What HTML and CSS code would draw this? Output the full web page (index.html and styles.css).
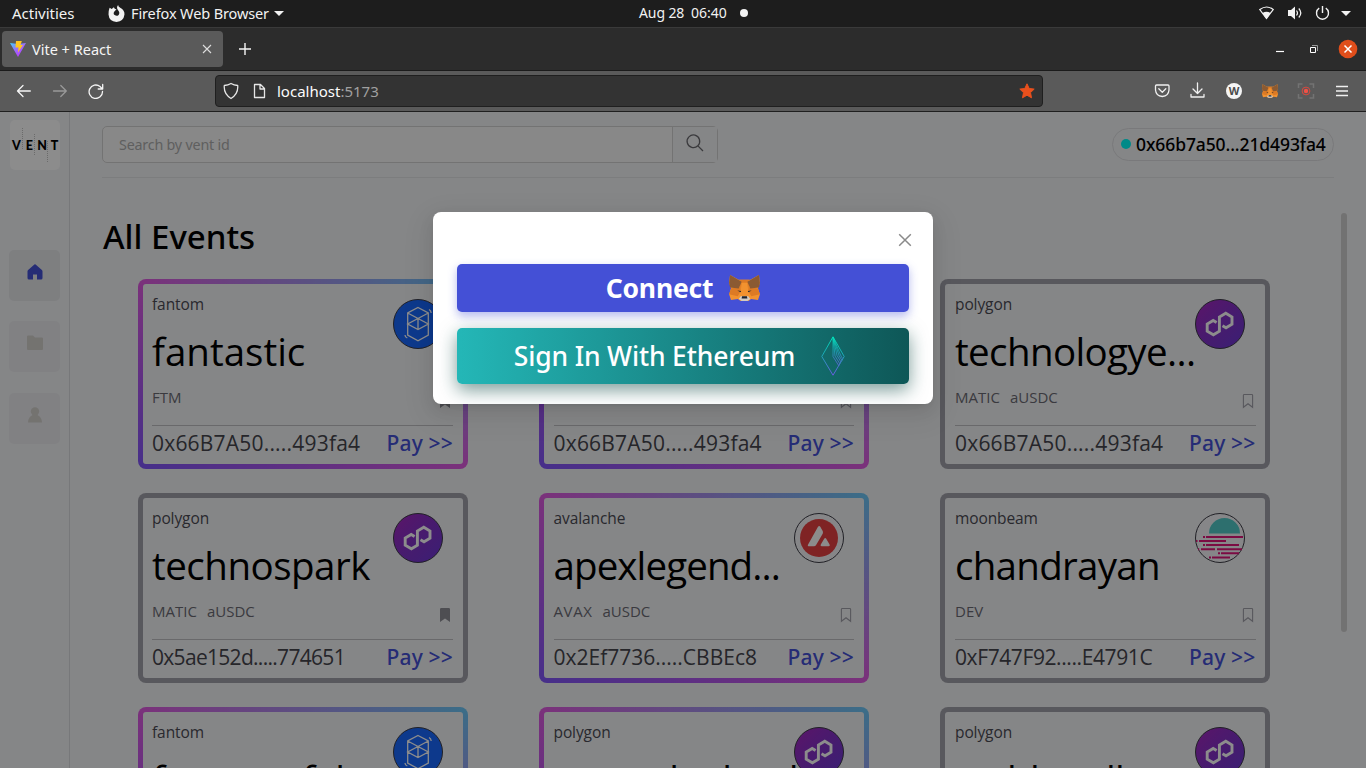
FILE: index.html
```html
<!DOCTYPE html>
<html lang="en">
<head>
<meta charset="utf-8">
<title>Vite + React</title>
<link rel="stylesheet" href="styles.css">
</head>
<body>
<svg class="defs" width="0" height="0">
  <defs>
    <linearGradient id="polyFill" x1="0" y1="0" x2="1" y2="1"><stop offset="0" stop-color="#a726c1"/><stop offset="0.5" stop-color="#8232c8"/><stop offset="1" stop-color="#6b38d4"/></linearGradient>
    <linearGradient id="ethLine" x1="0" y1="0" x2="0" y2="1"><stop offset="0" stop-color="#00e0b8"/><stop offset="0.45" stop-color="#1ba8b5"/><stop offset="1" stop-color="#6a5be0"/></linearGradient>
    <linearGradient id="viteFill" x1="0" y1="0" x2="0.7" y2="1"><stop offset="0" stop-color="#41d1ff"/><stop offset="0.5" stop-color="#9b6cfb"/><stop offset="1" stop-color="#bd34fe"/></linearGradient>
  </defs>
  <symbol id="fox" viewBox="0 0 32 27">
    <path fill="#f2922f" d="M1 0l9 5h12l9-5 1 8-2 6 2 6-2 6-7-1-3 2h-8l-3-2-7 1-2-6 2-6-2-6z"/>
    <path fill="#dd7a24" d="M2 14l9-2 1 5-3 5-9-2zM30 14l-9-2-1 5 3 5 9-2zM11 5h10l-1 12h-8z"/>
    <path fill="#f2922f" d="M13 8h6l1 10h-8z"/>
    <path fill="#8b5a32" d="M1 0l12 7-3 7-9-1-1-5zM31 0L19 7l3 7 9-1 1-5z"/>
    <path fill="#d2cbc4" d="M12 22l8 0 2 3-3 2h-6l-3-2z"/>
    <path fill="#1d2430" d="M13.500 22h5l.5 2.500h-6zM8.500 16l4 .5-.5 1.500zM23.500 16l-4 .5.5 1.500z"/>
  </symbol>
  <symbol id="polygon" viewBox="0 0 50 50">
    <circle cx="25" cy="25" r="24.500" fill="url(#polyFill)" stroke="#3c3c46"/>
    <path fill="none" stroke="#fff" stroke-width="2.900" d="M21.600 23.400l-3.400-2-6 3.600v7.200l6.200 3.600 6-3.600V18l6.400-3.700 6.200 3.700v7.200L31 28.800l-3.500-2"/>
  </symbol>
  <symbol id="fantom" viewBox="0 0 50 50">
    <circle cx="25" cy="25" r="24.500" fill="#1969ff" stroke="#3c3c46"/>
    <path fill="none" stroke="#fff" stroke-width="1.300" d="M25 8.500L35.300 14v22L25 41.700 14.700 36V14zM14.700 14L35.300 25 25 30.600 14.700 25 35.300 14M25 19.500v11M36 10.500q2 1 2.200 3.500M12 36q0 2 2.300 3"/>
  </symbol>
  <symbol id="avalanche" viewBox="0 0 50 50">
    <circle cx="25" cy="25" r="24.500" fill="#fff" fill-opacity=".15" stroke="#3c3c46"/>
    <circle cx="25" cy="25" r="19" fill="#e84142"/>
    <path fill="#fff" d="M24 13.800q1.200-1.600 2.300 0l2.400 4.300q.6 1.200 0 2.600l-6.600 11.300q-.8 1.200-2.200 1.200h-4.800q-2 0-1-1.800zM30.200 25.800q1-1.500 2 0l3.400 5.800q.8 1.500-1 1.600h-7q-1.600-.1-.8-1.600z"/>
  </symbol>
  <symbol id="moonbeam" viewBox="0 0 50 50">
    <circle cx="25" cy="25" r="24.500" fill="#fff" fill-opacity=".15" stroke="#3c3c46"/>
    <path fill="#53cbc8" d="M14 20.500a15.500 15.500 0 0131 0z"/>
    <path fill="none" stroke="#e1147b" stroke-width="2" d="M8 24h2m1 0h37M1 28h1.500M4 28h27M8 32h2m1 0h33M3 36.300h1.200M6 36.300h14M22 36.300h25M23 40.300h2m1 0h18M14 44.400h2m1 0h18"/>
  </symbol>
  <symbol id="mark" viewBox="0 0 12 16"><path fill="none" stroke="#a1a1aa" stroke-width="1.100" d="M2.200 1.500h7.600q.8 0 .8.800v12L6 10.700 1.400 14.300v-12q0-.8.800-.8z"/></symbol>
  <symbol id="mark-on" viewBox="0 0 12 16"><path fill="#8e8e96" d="M2.200 1h7.600q1.200 0 1.200 1.200v12.800L6 11.500 1 15V2.200Q1 1 2.200 1z"/></symbol>
</svg>

<header class="topbar">
  <span class="activities">Activities</span>
  <svg class="ff" viewBox="0 0 16 16"><path fill="#f2f2f2" fill-rule="evenodd" d="M1.500 2.500l2 1.300L5.500 2l1 1.800 1.500.2-2 2q-1.500 2 .3 3.500 2 1.300 3.700-.2 1.500-2-.5-4.300Q7.500 2.500 9.500 0q0 1.500 2 2.700Q15.800 5 15.500 9q-.8 6.500-7.500 7Q1 15.500.5 9 .3 5.500 1.500 2.500z"/></svg>
  <span class="app">Firefox Web Browser</span><i class="caret"></i>
  <span class="date">Aug 28</span><span class="time">06:40</span><i class="dot"></i>
  <svg class="tray" width="92" height="16" viewBox="0 0 92 16">
    <path fill="none" stroke="#f2f2f2" stroke-width="1.200" d="M.8 4.500q7-5 13.400 0L7.500 13.500z"/><path fill="#f2f2f2" d="M3.500 8q4-2.600 8 0l-4 6z"/>
    <path fill="#f2f2f2" d="M29 5h3l4-3.500v13L32 11h-3z"/><path fill="none" stroke="#f2f2f2" stroke-width="1.200" d="M37.500 5.500q2 2.500 0 5M39.800 3.500q4 4.500 0 9"/>
    <path fill="none" stroke="#f2f2f2" stroke-width="1.400" d="M60.200 3.200a6 6 0 106.600 0M63.500 1v7"/>
    <path fill="#f2f2f2" d="M82 6h10l-5 5z"/>
  </svg>
</header>

<div class="tabs">
  <div class="tab">
    <svg width="16" height="16" viewBox="0 0 16 16"><path fill="url(#viteFill)" d="M0 2l8 1 8-1-8 14z"/><path fill="#ffc51f" d="M6 0l6-.5L10.500 4h2.500L8 11.500l.5-5H5.500z"/></svg>
    <span>Vite + React</span>
    <svg class="tab-x" width="10" height="10" viewBox="0 0 10 10"><path stroke="#ddd" stroke-width="1.100" d="M1 1l8 8M9 1L1 9"/></svg>
  </div>
  <svg class="newtab" width="12" height="12" viewBox="0 0 12 12"><path stroke="#f5f5f5" stroke-width="1.400" d="M6 0v12M0 6h12"/></svg>
  <svg class="winctl" width="82" height="20" viewBox="0 0 82 20"><path stroke="#fff" stroke-width="1.200" d="M0 12.500h8"/><path fill="none" stroke="#fff" d="M34.500 8.500h5v5h-5z"/><path fill="none" stroke="#999" d="M36 6.500h5.500V12"/><circle cx="72" cy="10" r="9.300" fill="#e04e1b"/><path stroke="#fff" stroke-width="1.500" d="M68.500 6.500l7 7M75.500 6.500l-7 7"/></svg>
</div>

<div class="toolbar">
  <svg class="nav" width="88" height="16" viewBox="0 0 88 16" fill="none" stroke-width="1.300" stroke-linecap="round" stroke-linejoin="round"><path stroke="#f5f5f5" d="M14.300 8H1.500M7 2.500L1.500 8 7 13.500"/><path stroke="#999" d="M37.500 8h12.800M44.800 2.500L50.300 8l-5.500 5.500"/><path stroke="#f5f5f5" d="M86.500 8.500a6.700 6.700 0 11-2.500-5l2 2M86.700 1.500v4.500h-4.500"/></svg>
  <div class="url">
    <svg width="46" height="18" viewBox="0 0 46 18" fill="none" stroke="#e6e6e6" stroke-width="1.300" stroke-linejoin="round"><path d="M9 1.500q3 1.700 6.700 2Q16.500 12 9 16.500 1.500 12 2.300 3.500 6 3.200 9 1.500zM32.500 2.500h6l4 4v9h-10zM38 2.500v4.500h4.500"/></svg>
    <span class="host">localhost<b>:5173</b></span>
    <svg class="star" width="18" height="18" viewBox="0 0 18 18"><path fill="#e9501d" stroke="#e9501d" stroke-linejoin="round" d="M9 1.800l2.200 4.700 5 .6-3.700 3.500 1 5.200L9 13.200l-4.500 2.600 1-5.200L1.800 7.100l5-.6z"/></svg>
  </div>
  <svg class="ext" width="196" height="18" viewBox="0 0 196 18">
    <g fill="none" stroke="#f0f0f0" stroke-width="1.300" stroke-linecap="round" stroke-linejoin="round"><path d="M2.500 3H14q1 0 1 1v4q-.5 6-6.700 6.500Q2 14 1.500 8V4q0-1 1-1zM4.800 6.800l3.500 3.400 3.500-3.400M43.500 1v10.500M39 7l4.500 4.500L48 7M37 12.500V15h13v-2.500"/><path stroke-linecap="butt" d="M182 4.500h12M182 9h12M182 13.500h12"/></g>
    <circle cx="80" cy="9" r="8" fill="#f5f5f5"/><text x="80" y="13" class="w" text-anchor="middle">W</text>
    <use href="#fox" x="108" y="1.500" width="16" height="15"/>
    <path fill="none" stroke="#737373" stroke-width="1.500" d="M144.500 6V2h4M155.500 2h4v4M159.500 12v4h-4M148.500 16h-4v-4"/><circle cx="152" cy="9" r="3.900" fill="none" stroke="#d8483e"/><circle cx="152" cy="9" r="2.200" fill="#ef5147"/>
  </svg>
</div>

<div class="page">
  <nav class="side">
    <svg class="logo" width="50" height="50" viewBox="0 0 50 50"><rect width="50" height="50" rx="5" fill="#fff"/><path stroke="#c4c4c4" stroke-dasharray="1 1" d="M12.500 8v22M24.500 14v22M37.500 21v22"/><text y="29.500" x="2 15.800 27.200 40.800">VENT</text></svg>
    <a class="tile tile--home"><svg viewBox="0 0 16 16"><path fill="#4450d6" d="M7.400.5q.6-.6 1.200 0l6 5.200q.9.7.9 1.500V14q0 1.500-1.500 1.500h-4v-5H6v5H2Q.5 15.500.5 14V7.200q0-.8.9-1.500z"/></svg></a>
    <a class="tile"><svg viewBox="0 0 16 16"><path fill="#d4d1cd" d="M1 0.500h5l2 2h7q1 0 1 1v10.500q0 1-1 1H1q-1 0-1-1V1.500q0-1 1-1z"/></svg></a>
    <a class="tile"><svg viewBox="0 0 16 16"><circle cx="8" cy="4.500" r="4.200" fill="#d4d1cd"/><path fill="#d4d1cd" d="M5.500 8h5q4.300 2 4.500 7.500H1Q1.200 10 5.500 8z"/></svg></a>
  </nav>
  <main class="main">
    <div class="head">
      <div class="search"><span>Search by vent id</span><i><svg width="20" height="20" viewBox="0 0 20 20"><path fill="none" stroke="#6b6b70" stroke-width="1.300" d="M12.800 12.800a6.300 6.300 0 11.100-.1zM12.900 12.900l5.100 5.100"/></svg></i></div>
      <div class="wallet"><i></i><span>0x66b7a50...21d493fa4</span></div>
    </div>
    <h1>All Events</h1>
    <div class="grid">
      <article class="card card--glow"><div class="in"><p class="chain">fantom</p><h2 class="t-fantastic">fantastic</h2><svg class="coin"><use href="#fantom"/></svg><div class="tokens"><span>FTM</span><svg><use href="#mark-on"/></svg></div><div class="foot"><span class="a1">0x66B7A50.....493fa4</span><b>Pay &gt;&gt;</b></div></div></article>
      <article class="card card--glow"><div class="in"><svg class="coin"><use href="#fantom"/></svg><div class="tokens tokens--bare"><svg><use href="#mark"/></svg></div><div class="foot"><span class="a1">0x66B7A50.....493fa4</span><b>Pay &gt;&gt;</b></div></div></article>
      <article class="card"><div class="in"><p class="chain">polygon</p><h2 class="t-technologye">technologye...</h2><svg class="coin"><use href="#polygon"/></svg><div class="tokens"><span>MATIC</span><span>aUSDC</span><svg><use href="#mark"/></svg></div><div class="foot"><span class="a1">0x66B7A50.....493fa4</span><b>Pay &gt;&gt;</b></div></div></article>
      <article class="card"><div class="in"><p class="chain">polygon</p><h2 class="t-technospark">technospark</h2><svg class="coin"><use href="#polygon"/></svg><div class="tokens"><span>MATIC</span><span>aUSDC</span><svg><use href="#mark-on"/></svg></div><div class="foot"><span class="a2">0x5ae152d.....774651</span><b>Pay &gt;&gt;</b></div></div></article>
      <article class="card card--glow"><div class="in"><p class="chain">avalanche</p><h2 class="t-apex">apexlegend...</h2><svg class="coin"><use href="#avalanche"/></svg><div class="tokens"><span class="avax">AVAX</span><span>aUSDC</span><svg><use href="#mark"/></svg></div><div class="foot"><span class="a3">0x2Ef7736.....CBBEc8</span><b>Pay &gt;&gt;</b></div></div></article>
      <article class="card"><div class="in"><p class="chain">moonbeam</p><h2 class="t-chandrayan">chandrayan</h2><svg class="coin"><use href="#moonbeam"/></svg><div class="tokens"><span>DEV</span><svg><use href="#mark"/></svg></div><div class="foot"><span class="a4">0xF747F92.....E4791C</span><b>Pay &gt;&gt;</b></div></div></article>
      <article class="card card--glow"><div class="in"><p class="chain">fantom</p><h2>fantomufel</h2><svg class="coin"><use href="#fantom"/></svg></div></article>
      <article class="card card--glow"><div class="in"><p class="chain">polygon</p><h2>cosmolanland</h2><svg class="coin"><use href="#polygon"/></svg></div></article>
      <article class="card"><div class="in"><p class="chain">polygon</p><h2>techlunall</h2><svg class="coin"><use href="#polygon"/></svg></div></article>
    </div>
    <i class="thumb"></i>
  </main>

  <div class="overlay">
    <section class="modal">
      <svg class="close" width="14" height="14" viewBox="0 0 14 14"><path stroke="#8a8a8a" stroke-width="1.500" d="M1.200 1.200l11.600 11.600M12.800 1.200L1.200 12.800"/></svg>
      <button class="btn btn--connect"><span>Connect</span><svg width="32" height="27"><use href="#fox"/></svg></button>
      <button class="btn btn--eth"><span>Sign In With Ethereum</span>
        <svg width="24" height="40" viewBox="0 0 24 40" fill="none" stroke="url(#ethLine)" stroke-width="1"><path d="M12 .8L23.200 20.500 12 39.200.8 20.500z"/><path stroke-width=".8" d="M12 1v19.500L18 30M12 1l2 19 5 8M12 1l4 18.500 4 6.500M12 1l6 18.500 3 5M12 1l8 19 1.500 2.500"/></svg></button>
    </section>
  </div>
</div>
</body>
</html>
```
FILE: styles.css
```css
* { box-sizing: border-box; }
body { margin: 0; height: 768px; overflow: hidden; display: flex; flex-direction: column; font-family: "Noto Sans", sans-serif; background: #f3f4f6; }
h1, h2, p { margin: 0; font-weight: 400; }
svg { display: block; flex: none; }
.defs { position: absolute; }

/* desktop bar */
.topbar { height: 28px; flex: none; display: flex; align-items: center; background: #1d1d1d; border-bottom: 1px solid #3a3a3a; color: #f2f2f2; font-size: 15px; line-height: 20px; padding: 0 0 1px 12px; white-space: nowrap; }
.activities { width: 96px; }
.ff { width: 17px; height: 17px; margin-right: 6px; }
.app { font-size: 14.500px; letter-spacing: -.12px; width: 139px; }
.caret { border: 5px solid transparent; border-top-color: #f2f2f2; border-bottom: 0; margin: 1px 0 0 4px; }
.date { font-size: 14px; letter-spacing: -.1px; margin-left: 355px; width: 52px; }
.time { font-size: 14px; width: 49px; }
.dot { width: 8px; height: 8px; border-radius: 50%; background: #f2f2f2; }
.tray { margin-left: auto; margin-right: 15px; }

/* browser tabs */
.tabs { height: 43px; flex: none; display: flex; align-items: center; background: #2c2c2c; border-bottom: 1px solid #1b1b1b; }
.tab { width: 221px; height: 36px; margin: 0 0 1px 2px; border-radius: 4px; background: #5a5a5a; display: flex; align-items: center; gap: 6px; padding: 0 11px 0 8px; color: #f5f5f5; font-size: 14.500px; }
.tab-x { margin-left: auto; }
.newtab { margin-left: 15.500px; }
.winctl { margin: 0 8px 0 auto; }

/* browser toolbar */
.toolbar { height: 41px; flex: none; display: flex; align-items: center; background: #5a5a5a; border-bottom: 1px solid #1f1f1f; }
.nav { margin-left: 16px; }
.url { width: 828px; height: 32px; margin-left: 111px; border: 1px solid #1f1f1f; border-radius: 4px; background: #333; display: flex; align-items: center; padding: 0 6px; }
.host { margin-left: 9px; font-size: 15px; color: #fbfbfb; }
.host b { font-weight: 400; color: #a0a0a0; }
.star { margin-left: auto; }
.ext { margin: 0 16px 0 auto; }
.w { font: 700 11px "Noto Sans", sans-serif; fill: #4a4a4a; }

/* application */
.page { position: relative; flex: 1; min-height: 0; display: flex; overflow: hidden; }
.side { width: 70px; border-right: 1px solid #d9dade; flex: none; display: flex; flex-direction: column; align-items: flex-start; gap: 20.400px; padding: 8px 0 0 9px; }
.logo { margin: 0 0 59.600px 1px; font: 900 12.500px Lato, sans-serif; }
.tile { width: 51px; height: 51px; border-radius: 5px; background: #ebecef; display: flex; justify-content: center; padding-top: 14px; }
.tile--home { background: #e5e7ea; }
.tile svg { width: 16px; height: 16px; }

.main { flex: 1; position: relative; padding: 14px 0 0 32px; font-family: "Open Sans", sans-serif; }
.head { width: 1232px; height: 52px; border-bottom: 1px solid #e2e3e6; display: flex; justify-content: space-between; align-items: flex-start; }
.search { width: 616px; height: 37px; border: 1px solid #d2d2d2; border-radius: 5px; background: #f8f8f8; display: flex; align-items: center; padding-left: 16px; color: #adadad; font: 14.300px "Noto Sans", sans-serif; letter-spacing: -.2px; }
.search i { margin-left: auto; width: 45px; height: 35px; border-left: 1px solid #d2d2d2; display: grid; place-items: center; padding-bottom: 3px; background: #f3f4f6; }
.wallet { width: 222px; height: 33px; margin-top: 2px; border: 1px solid #dcdde0; border-radius: 17px; display: flex; align-items: center; gap: 5px; padding: 0 0 1px 8px; font: 500 17.500px "Noto Sans", sans-serif; letter-spacing: -.1px; white-space: nowrap; color: #000; }
.wallet i { width: 10px; height: 10px; border-radius: 50%; background: #00fbf8; flex: none; }
h1 { font: 500 33px/44px "Noto Sans", sans-serif; letter-spacing: 0; padding: 37px 0 20px 1px; }

.grid { display: grid; grid-template-columns: repeat(3, 330px); grid-auto-rows: 190px; gap: 24px 71px; padding-left: 36px; }
.card { padding: 5px; border-radius: 8px; background: #a1a1aa; }
.card--glow { background: linear-gradient(90deg, #e059e0, #6cc8f7) top / 100% 5px no-repeat, linear-gradient(90deg, #8056fa, #e059e0) bottom / 100% 5px no-repeat, linear-gradient(#e059e0, #8056fa) left / 50% 100% no-repeat, linear-gradient(#6cc8f7, #e059e0) right / 50% 100% no-repeat; }
.in { position: relative; height: 180px; border-radius: 3px; background: #f3f4f6; padding: 9px 10px 0 9px; }
.card:nth-child(3n+2) .in { padding-left: 9.500px; }
.card:nth-child(3n) .in { padding: 9px 9.500px 0 10px; }
.chain { font-size: 15.500px; line-height: 22px; letter-spacing: -.1px; color: #4b4b54; }
h2 { font-size: 38.500px; line-height: 52px; height: 52px; margin: 10px 0 0; color: #000; white-space: nowrap; letter-spacing: -.6px; }
.t-fantastic { letter-spacing: 0; }
.t-technologye { letter-spacing: -.62px; }
.t-technospark { letter-spacing: -.5px; }
.t-apex { letter-spacing: -.9px; }
.t-chandrayan { letter-spacing: -.72px; }
.coin { position: absolute; left: 250px; top: 15px; width: 50px; height: 50px; }
.tokens { display: flex; align-items: center; gap: 10px; height: 22px; margin-top: 9px; color: #6b6b74; font-size: 15px; line-height: 22px; }
.tokens--bare { margin-top: 93px; }
.avax { letter-spacing: .6px; }
.tokens svg { width: 12px; height: 16px; margin: 8px 2px 0 auto; }
.foot { margin-top: 17px; border-top: 1px solid #c0c0c3; display: flex; justify-content: space-between; line-height: 34px; font-size: 21px; color: #45454d; }
.foot b { font: 500 21px/34px "Noto Sans", sans-serif; letter-spacing: .2px; color: #4450d6; }
.a1 { letter-spacing: .2px; }
.a2 { letter-spacing: -.7px; }
.a4 { letter-spacing: -.4px; }
.thumb { position: absolute; left: 1271px; top: 101px; width: 6px; height: 419px; border-radius: 3px; background: #d0d0d0; }

/* dialog */
.overlay { position: absolute; inset: 0; background: rgba(0, 0, 0, .45); display: flex; justify-content: center; align-items: flex-start; padding-top: 100px; }
.modal { width: 500px; height: 192px; border-radius: 8px; background: #fff; padding: 21px 24px 0; display: flex; flex-direction: column; box-shadow: 0 6px 16px rgba(0,0,0,.08), 0 3px 6px -4px rgba(0,0,0,.12), 0 9px 28px 8px rgba(0,0,0,.05); }
.close { align-self: flex-end; margin-right: -3px; margin-bottom: 17px; }
.btn { border: 0; border-radius: 5px; color: #fff; display: flex; align-items: center; justify-content: center; font-family: "Noto Sans", sans-serif; font-size: 26.500px; padding: 0; flex: none; white-space: nowrap; }
.btn--connect { height: 48px; background: #4450d6; font-weight: 700; gap: 16px; letter-spacing: -.2px; box-shadow: 0 4px 10px rgba(68, 80, 214, .4); }
.btn--connect svg { width: 31px; height: 26px; }
.btn--eth { height: 56px; margin-top: 16px; background: linear-gradient(90deg, #24b7b7, #0e5757); font-weight: 500; gap: 26px; letter-spacing: -.15px; padding-right: 16px; box-shadow: 0 6px 18px rgba(14, 75, 70, .55); }
.btn--eth svg { margin-right: -9px; }
```
